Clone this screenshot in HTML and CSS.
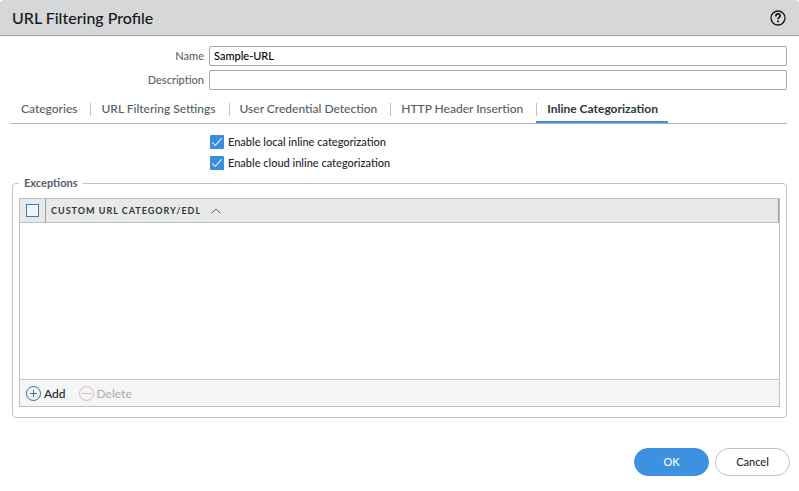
FILE: index.html
```html
<!DOCTYPE html>
<html lang="en">
<head>
<meta charset="utf-8">
<meta name="viewport" content="width=device-width, initial-scale=1">
<title>URL Filtering Profile</title>
<link rel="stylesheet" href="styles.css">
</head>
<body>
<form class="dialog">
  <header class="dialog-header">
    <h1>URL Filtering Profile</h1>
    <button type="button" class="help" aria-label="Help">
      <svg width="16" height="16" viewBox="0 0 16 16" fill="none" stroke="#151719" aria-hidden="true">
        <circle cx="8" cy="8" r="7" stroke-width="1.3"/>
        <path d="M5.9 6.4V6a2.1 2.1 0 0 1 4.2 0c0 1.3-2.1 1.5-2.1 3.2" stroke-width="1.7"/>
        <path d="M8 10.4v1.8" stroke-width="1.8"/>
      </svg>
    </button>
  </header>

  <div class="fields">
    <label for="name">Name</label>
    <input id="name" type="text" value="Sample-URL">
    <label for="description">Description</label>
    <input id="description" type="text">
  </div>

  <nav class="tabs">
    <a href="#categories">Categories</a>
    <a href="#settings">URL Filtering Settings</a>
    <a href="#credentials">User Credential Detection</a>
    <a href="#headers">HTTP Header Insertion</a>
    <a href="#inline" class="active" aria-current="page">Inline Categorization</a>
  </nav>

  <div class="options">
    <label><input type="checkbox" class="tick" checked>Enable local inline categorization</label>
    <label><input type="checkbox" class="tick" checked>Enable cloud inline categorization</label>
  </div>

  <fieldset class="exceptions">
    <legend>Exceptions</legend>
    <div class="grid">
      <table>
        <thead>
          <tr>
            <th class="select"><input type="checkbox" class="select-all" aria-label="Select all"></th>
            <th><span class="heading">CUSTOM URL CATEGORY/EDL
              <svg width="10" height="6" viewBox="0 0 10 6" fill="none" stroke="#5b6064" aria-hidden="true"><path d="M.6 5.3 5 .9l4.4 4.4"/></svg></span>
            </th>
          </tr>
        </thead>
        <tbody></tbody>
      </table>
      <div class="toolbar">
        <button type="button">
          <svg width="16" height="16" viewBox="0 0 16 16" fill="none" stroke="#32709c" aria-hidden="true"><circle cx="7.5" cy="7.5" r="7"/><path d="M4 7.5h7M7.5 4v7"/></svg>Add
        </button>
        <button type="button" disabled>
          <svg width="16" height="16" viewBox="0 0 16 16" fill="none" stroke="#e2b8b8" aria-hidden="true"><circle cx="7.5" cy="7.5" r="7"/><path d="M3 7.5h9"/></svg>Delete
        </button>
      </div>
    </div>
  </fieldset>

  <footer class="actions">
    <button type="submit" class="primary">OK</button>
    <button type="button">Cancel</button>
  </footer>
</form>
</body>
</html>
```
FILE: styles.css
```css
* {
  box-sizing: border-box;
}

body {
  margin: 0;
  background: #fff;
  color: #24292e;
  font: 500 11px/16px Lato, "Liberation Sans", sans-serif;
}

button,
input {
  font: inherit;
  margin: 0;
}

button {
  cursor: pointer;
}

.dialog {
  display: flex;
  flex-direction: column;
  min-height: 100vh;
}

.dialog-header {
  display: flex;
  align-items: center;
  justify-content: space-between;
  height: 36px;
  padding: 0 13px 0 12px;
  background: #d6d7d9;
  border-bottom: 1px solid #9c9da0;
  border-radius: 4px 4px 0 0;
}

.dialog-header h1 {
  margin: 0;
  color: #151719;
  font-size: 16px;
  font-weight: 500;
  line-height: 20px;
}

.help {
  display: flex;
  padding: 0;
  border: 0;
  background: none;
}

.fields {
  display: grid;
  grid-template-columns: 192px 1fr;
  gap: 4px 5px;
  align-items: center;
  padding: 10px 12px 0;
}

.fields label {
  color: #5c646d;
  text-align: right;
}

.fields input {
  width: 100%;
  height: 20px;
  padding: 0 4px 1px;
  border: 1px solid #a9a9ab;
  border-radius: 2px;
  background: #fff;
  color: #000;
}

.tabs {
  display: flex;
  height: 34px;
  margin: 0 12px 0 10px;
  border-bottom: 1px solid #b2b3b6;
}

.tabs a {
  position: relative;
  padding: 11px 13px 0 11px;
  color: #545d66;
  font-size: 12px;
  text-decoration: none;
}

.tabs a + a::before {
  content: "";
  position: absolute;
  left: 0;
  top: 13px;
  width: 1px;
  height: 13px;
  background: #bcc4cb;
}

.tabs .active {
  padding-right: 10px;
  border-bottom: 2px solid #3c92e1;
  color: #2f353c;
  font-weight: 700;
}

.options {
  display: grid;
  gap: 5px;
  justify-items: start;
  padding: 10px 12px 0 210px;
}

.options label {
  display: flex;
  align-items: center;
  gap: 4px;
}

.tick {
  appearance: none;
  width: 14px;
  height: 14px;
  border-radius: 1px;
  background: #3a8dde;
  display: grid;
  place-items: center;
}

.tick:checked::before {
  content: "";
  width: 10px;
  height: 10px;
  background: #fff;
  clip-path: polygon(0 60%, 7% 53%, 33% 77%, 92% 10%, 99% 17%, 34% 91%);
}

.exceptions {
  min-width: 0;
  margin: 4px 12px 0;
  padding: 7px 6px 10px;
  border: 1px solid #c0c2c4;
  border-radius: 4px;
}

.exceptions legend {
  padding: 0 5px;
  color: #55606a;
  font-weight: 700;
}

.grid {
  display: flex;
  flex-direction: column;
  min-height: 209px;
  border: 1px solid #bdbfc3;
}

.grid table {
  width: 100%;
  border-collapse: separate;
  border-spacing: 0;
}

.grid th {
  height: 24px;
  padding: 0 5px;
  border-right: 1px solid #9a9ca1;
  border-bottom: 1px solid #bdbfc3;
  background: #e8eaea;
  color: #2f353c;
  font-size: 9px;
  font-weight: 700;
  letter-spacing: 1px;
  text-align: left;
}

.grid .select {
  width: 26px;
  padding: 0 6px;
}

.select-all {
  appearance: none;
  display: block;
  width: 13px;
  height: 13px;
  border: 1px solid #347fb8;
  background: #f2f5f7;
}

.heading {
  display: flex;
  align-items: center;
  gap: 10px;
}

.toolbar {
  display: flex;
  align-items: center;
  gap: 13px;
  height: 27px;
  margin-top: auto;
  padding: 2px 6px 0;
  border-top: 1px solid #c8cacc;
  background: #f4f6f6;
}

.toolbar button {
  display: flex;
  align-items: center;
  gap: 2px;
  padding: 0;
  border: 0;
  background: none;
  color: #24292e;
  font-size: 12px;
}

.toolbar button:disabled {
  color: #aeb0b1;
  cursor: default;
}

.actions {
  display: flex;
  justify-content: flex-end;
  gap: 6px;
  padding: 30px 9px 15px;
}

.actions button {
  width: 75px;
  height: 28px;
  padding: 0;
  border: 1px solid #c0c2c4;
  border-radius: 14px;
  background: #fff;
  color: #24292e;
}

.actions .primary {
  border-color: #3c92e1;
  background: #3c92e1;
  color: #fff;
}
```
